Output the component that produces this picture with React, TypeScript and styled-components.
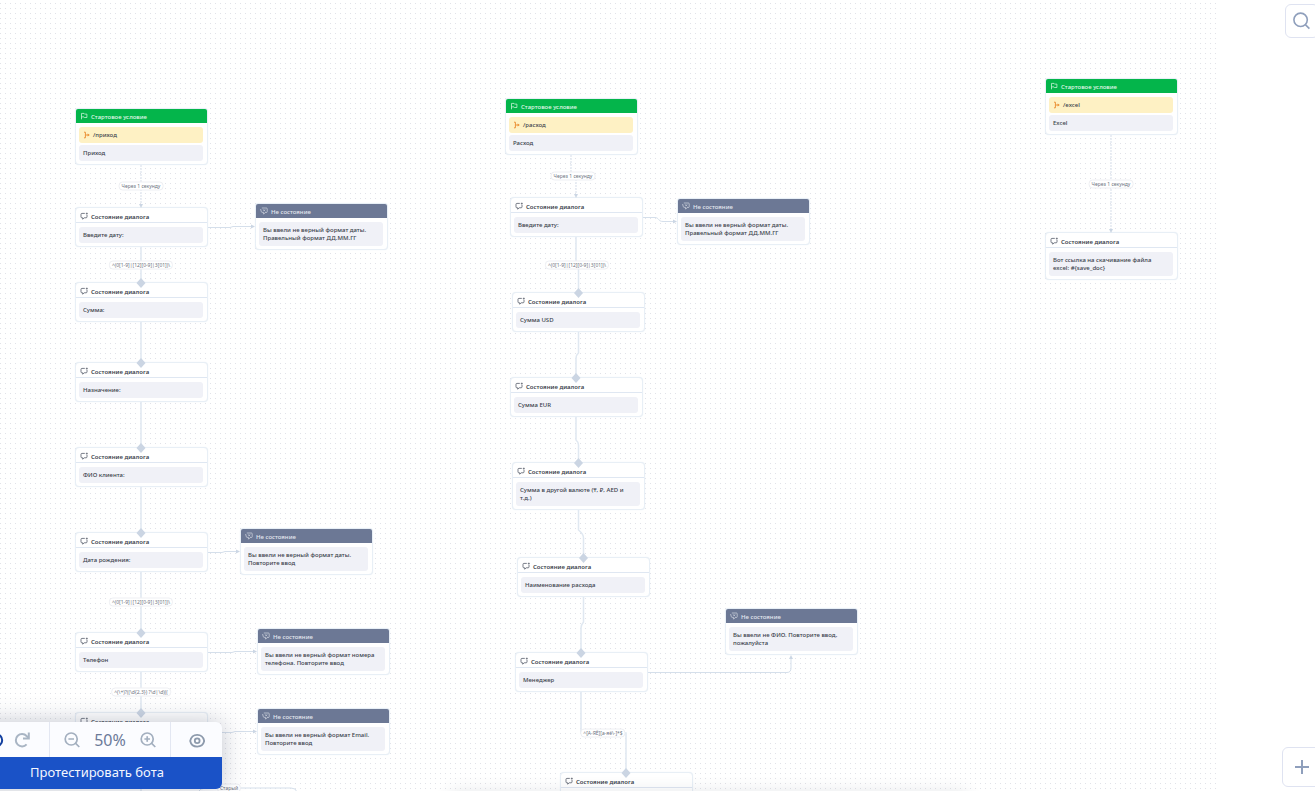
import React from "react";
import styled, { createGlobalStyle, css } from "styled-components";

const GlobalStyle = createGlobalStyle`
  * { box-sizing: border-box; }
  html, body { margin: 0; height: 100%; overflow: hidden; background: #fff; }
  #root { height: 100%; }
  button { font: inherit; margin: 0; padding: 0; border: 0; background: none; cursor: pointer; }
`;

const Page = styled.div`
  display: flex;
  height: 100vh;
  overflow: hidden;
  font-family: "Noto Sans", sans-serif;
  color: #3a3f4b;
`;

const Canvas = styled.main`
  position: relative;
  flex: 1;
  min-width: 0;
  overflow: hidden;
  background-image: radial-gradient(circle at 50% 50%, #e1e2e8 0, #e5e6eb 0.5px, transparent 1px);
  background-size: 5px 5px;
  background-position: -2px 1px;
`;

const Edges = styled.svg`
  position: absolute;
  inset: 0;
  width: 100%;
  height: 100%;
  fill: none;
  stroke: #e0e8f1;
  stroke-width: 1.5;
`;

type Kind = "start" | "dialog" | "negative";

const Card = styled.article<{ $x: number; $y: number }>`
  position: absolute;
  left: ${(p) => p.$x}px;
  top: ${(p) => p.$y}px;
  width: 133px;
  border: 1px solid #e8eff6;
  border-radius: 4px;
  background: #fff;
  box-shadow: 0 0 1px #dfe8f2;
`;

const headerLook = {
  start: css`
    background: #04b54b;
    color: #e2f8ea;
    font-weight: 500;
  `,
  negative: css`
    background: #6c7895;
    color: #e6e9f0;
    font-weight: 500;
  `,
  dialog: css`
    height: 15px;
    padding-top: 3px;
    border-bottom: 1px solid #dfe7f2;
    font-weight: 600;
  `,
};

const CardHeader = styled.h2<{ $kind: Kind }>`
  display: flex;
  align-items: center;
  gap: 3px;
  height: 14px;
  margin: 0;
  padding: 1px 4px 0;
  border-radius: 2px 2px 0 0;
  font-size: 6px;
  line-height: 8px;
  white-space: nowrap;
  ${(p) => headerLook[p.$kind]}
  svg { flex: none; margin-bottom: 1px; }
`;

const CardBody = styled.div`
  display: flex;
  flex-direction: column;
  gap: 2px;
  padding: 4px 4px 3px 3px;
`;

const Message = styled.p<{ $trigger?: boolean }>`
  display: flex;
  align-items: center;
  gap: 2px;
  min-height: 16px;
  margin: 0;
  padding: 4px;
  border-radius: 3px;
  background: ${(p) => (p.$trigger ? "#fef1c4" : "#f0f1f7")};
  font-size: 6px;
  font-weight: 500;
  line-height: 8px;
  white-space: pre;
`;

const EdgeLabel = styled.span<{ $x: number; $y: number }>`
  position: absolute;
  left: ${(p) => p.$x}px;
  top: ${(p) => p.$y}px;
  transform: translate(-50%, -50%);
  padding: 0 2px;
  border: 1px solid #eeeff3;
  border-radius: 4px;
  background: #fff;
  color: #6d7380;
  font-size: 5px;
  line-height: 7px;
  white-space: nowrap;
`;

const BottomShade = styled.div`
  position: absolute;
  left: 450px;
  right: 250px;
  top: 100%;
  height: 20px;
  box-shadow: 0 0 16px rgba(60, 70, 90, 0.12);
`;

const Toolbar = styled.section`
  position: absolute;
  left: -28px;
  bottom: 2px;
  width: 250px;
  border-radius: 6px;
  background: #fbfcff;
  box-shadow: 0 0 24px rgba(50, 60, 90, 0.3);
`;

const Tools = styled.div`
  display: flex;
  height: 35px;
`;

const ToolGroup = styled.div<{ $width?: number }>`
  display: flex;
  align-items: center;
  justify-content: center;
  gap: 12px;
  ${(p) => (p.$width ? `width: ${p.$width}px;` : "flex: 1;")}
  & + & { border-left: 1px solid #e3e7f2; }
`;

const HistoryGroup = styled(ToolGroup)`
  gap: 10px;
  padding-right: 4px;
`;

const IconButton = styled.button<{ $color: string }>`
  display: grid;
  place-items: center;
  width: 16px;
  height: 16px;
  color: ${(p) => p.$color};
`;

const ZoomValue = styled.output`
  width: 36px;
  text-align: center;
  color: #6b7a99;
  font-size: 16px;
  line-height: 20px;
`;

const TestButton = styled.button`
  display: block;
  width: 100%;
  height: 32px;
  padding-bottom: 2px;
  border-radius: 0 0 6px 6px;
  background: #1a52c7;
  color: #f4f7ff;
  font-size: 13px;
  line-height: 20px;
`;

const Rail = styled.aside`
  display: flex;
  justify-content: flex-end;
  width: 98px;
  overflow: hidden;
  background: #fff;
`;

const RailColumn = styled.div`
  display: flex;
  flex-direction: column;
  align-items: center;
  justify-content: space-between;
  margin-right: -7px;
  padding: 4px 0;
`;

const RailButton = styled.button<{ $size: number }>`
  display: grid;
  place-items: center;
  width: ${(p) => p.$size}px;
  height: ${(p) => p.$size}px;
  border: 1px solid #dfe3f1;
  border-radius: 6px;
  background: #fff;
  color: #8f9fbc;
`;

const FlagIcon = () => (
  <svg width="8" height="8" viewBox="0 0 8 8" fill="none" stroke="currentColor" strokeWidth="0.7">
    <path d="M1.5 7.3V1.4H4l.6.7h2.3v3.4H4.4L4 4.9H1.5" />
  </svg>
);

const ChatIcon = () => (
  <svg width="8" height="8" viewBox="0 0 8 8" fill="none" stroke="#565c69" strokeWidth="0.8">
    <path d="M4.8 1.4H1.900q-.9 0-.9.9v2.600q0 .9.9.9h.8v1.400l1.500-1.400h1.900q.9 0 .9-.9V3" />
    <path d="M6.800.6v2M5.800 1.600h2" strokeWidth="0.7" />
  </svg>
);

const ChatOffIcon = () => (
  <svg width="8" height="8" viewBox="0 0 8 8" fill="none" stroke="currentColor" strokeWidth="0.6">
    <path d="M1.8 1h4.6q.8 0 .8.8v2.9q0 .8-.8.8H5.2L3.6 7.2V5.5H2.4q-1 0-1.2-1.2L.6 2" />
    <path d="M3.2 2.4l1.9 1.9M5.1 2.4L3.2 4.3" />
  </svg>
);

const TriggerIcon = () => (
  <svg width="8" height="8" viewBox="0 0 8 8" fill="none" stroke="#eb9238" strokeWidth="1">
    <path d="M1 1.200H2.400V6.800H1M2.400 4H6" />
    <path d="M4.600 2.400L6.800 4L4.600 5.600Z" fill="#eb9238" stroke="none" />
  </svg>
);

const headers: Record<Kind, { title: string; icon: React.ReactNode }> = {
  start: { title: "Стартовое условие", icon: <FlagIcon /> },
  dialog: { title: "Состояние диалога", icon: <ChatIcon /> },
  negative: { title: "Не состояние", icon: <ChatOffIcon /> },
};

type BotNode = { kind: Kind; x: number; y: number; text?: string; command?: string };

const nodes: BotNode[] = [
  { kind: "start", x: 75, y: 108, command: "/приход", text: "Приход" },
  { kind: "dialog", x: 75, y: 207, text: "Введите дату:" },
  { kind: "negative", x: 255, y: 203, text: "Вы ввели не верный формат даты.\nПравельный формат ДД.ММ.ГГ" },
  { kind: "dialog", x: 75, y: 282, text: "Сумма:" },
  { kind: "dialog", x: 75, y: 362, text: "Назначение:" },
  { kind: "dialog", x: 75, y: 447, text: "ФИО клиента:" },
  { kind: "dialog", x: 75, y: 532, text: "Дата рождения:" },
  { kind: "negative", x: 240, y: 528, text: "Вы ввели не верный формат даты.\nПовторите ввод" },
  { kind: "dialog", x: 75, y: 632, text: "Телефон" },
  { kind: "negative", x: 257, y: 628, text: "Вы ввели не верный формат номера\nтелефона. Повторите ввод" },
  { kind: "dialog", x: 75, y: 712 },
  { kind: "negative", x: 257, y: 708, text: "Вы ввели не верный формат Email.\nПовторите ввод" },
  { kind: "start", x: 505, y: 98, command: "/расход", text: "Расход" },
  { kind: "dialog", x: 510, y: 197, text: "Введите дату:" },
  { kind: "negative", x: 677, y: 198, text: "Вы ввели не верный формат даты.\nПравельный формат ДД.ММ.ГГ" },
  { kind: "dialog", x: 512, y: 292, text: "Сумма USD" },
  { kind: "dialog", x: 510, y: 377, text: "Сумма EUR" },
  { kind: "dialog", x: 512, y: 462, text: "Сумма в другой валюте (₸, ₽, AED и\nт.д.)" },
  { kind: "dialog", x: 517, y: 557, text: "Наименование расхода" },
  { kind: "dialog", x: 515, y: 652, text: "Менеджер" },
  { kind: "negative", x: 725, y: 608, text: "Вы ввели не ФИО. Повторите ввод,\nпожалуйста" },
  { kind: "dialog", x: 560, y: 772 },
  { kind: "start", x: 1045, y: 78, command: "/excel", text: "Excel" },
  { kind: "dialog", x: 1045, y: 232, text: "Вот ссылка на скачивание файла\nexcel: #{save_doc}" },
];

const labels = [
  { x: 141, y: 186, text: "Через 1 секунду" },
  { x: 141, y: 265, text: "^(0[1-9]|[12][0-9]|3[01])\\" },
  { x: 141, y: 602, text: "^(0[1-9]|[12][0-9]|3[01])\\" },
  { x: 141, y: 692, text: "^(\\+)?((\\d{2,3}) ?\\d|\\d)((" },
  { x: 229, y: 788, text: "Старый" },
  { x: 573, y: 176, text: "Через 1 секунду" },
  { x: 577, y: 265, text: "^(0[1-9]|[12][0-9]|3[01])\\" },
  { x: 603, y: 733, text: "^[А-ЯЁ][а-яё\\-]*$" },
  { x: 1111, y: 184, text: "Через 1 секунду" },
];

const solidEdges = [
  "M141 247V283M141 322V363M141 402V448M141 487V533M141 572V633M141 672V713M141 750V800",
  "M576 237V265M578.5 265V293",
  "M578.5 332V353Q576 355 576 359V378",
  "M576 417V440Q578.5 442 578.5 445V463",
  "M578.5 510V530Q583.5 534 583.5 538V558",
  "M583.5 597V622Q581 625 581 628V653",
  "M581 692V733H626V773",
];

const thinEdges = [
  "M208 227.5H230L233 226.5H252",
  "M208 552.5H222L225 551.5H237",
  "M208 652.5H232L235 651.5H254",
  "M208 732.5H232L235 731.5H254",
  "M642 217.5H655C659 217.5 658 221.5 663 221.5H674",
  "M647 672.5H787Q791 672.5 791 668V658",
  "M198 792Q200 788 206 788H291Q296 788 297 792",
];

const delayEdges = ["M141 165V204", "M571 155V176M576 176V195", "M1111 135V230"];

const arrows = [
  "M141 208l-2-4h4z",
  "M576 198l-2-4h4z",
  "M1111 233l-2-4h4z",
  "M255 226.5l-4-2v4z",
  "M240 551.5l-4-2v4z",
  "M257 651.5l-4-2v4z",
  "M257 731.5l-4-2v4z",
  "M677 221.5l-4-2v4z",
  "M791 655l-2 4h4z",
];

const ports = [
  [141, 283], [141, 363], [141, 448], [141, 533], [141, 633], [141, 713],
  [578.5, 293], [576, 378], [578.5, 463], [583.5, 558], [581, 653], [626, 773],
];

function NodeCard({ kind, x, y, text, command }: BotNode) {
  const { title, icon } = headers[kind];
  return (
    <Card $x={x} $y={y}>
      <CardHeader $kind={kind}>
        {icon}
        {title}
      </CardHeader>
      <CardBody>
        {command && (
          <Message $trigger>
            <TriggerIcon />
            {command}
          </Message>
        )}
        <Message>{text}</Message>
      </CardBody>
    </Card>
  );
}

const HistoryArrow = ({ flip }: { flip?: boolean }) => (
  <svg width="16" height="16" viewBox="0 0 16 16" fill="none" stroke="currentColor" strokeWidth="2">
    <g transform={flip ? "matrix(-1 0 0 1 16 0)" : undefined}>
      <path d="M12.6 12.4A6.200 6.200 0 1 1 12.6 4L14.6 6" />
      <path d="M14.8 .6V6.400H9" />
    </g>
  </svg>
);

const Magnifier = ({ plus }: { plus?: boolean }) => (
  <svg width="16" height="16" viewBox="0 0 16 16" fill="none" stroke="currentColor" strokeWidth="1.7">
    <circle cx="7.2" cy="7" r="6" />
    <path d="M11.4 11.2L15.3 15M4.4 7H10" />
    {plus && <path d="M7.2 4.2V9.8" />}
  </svg>
);

const EyeIcon = () => (
  <svg width="16" height="16" viewBox="0 0 16 16" fill="none" stroke="currentColor" strokeWidth="1.8">
    <path d="M1.200 9C2 5 4.700 2.800 8.200 2.800S14.400 5 15.200 9C14.400 12.800 11.700 14.600 8.200 14.600S2 12.800 1.200 9Z" />
    <circle cx="8.200" cy="8.800" r="2.400" />
  </svg>
);

export default function App() {
  return (
    <>
      <GlobalStyle />
      <Page>
        <Canvas>
          <Edges aria-hidden="true">
            {solidEdges.map((d) => <path key={d} d={d} />)}
            {thinEdges.map((d) => <path key={d} d={d} strokeWidth="1" stroke="#d5dfeb" />)}
            {delayEdges.map((d) => <path key={d} d={d} strokeDasharray="2 1" stroke="#e4e9f1" />)}
          </Edges>
          {nodes.map((n) => <NodeCard key={`${n.x}-${n.y}`} {...n} />)}
          <Edges aria-hidden="true">
            {arrows.map((d) => <path key={d} d={d} fill="#cbd6e4" stroke="none" />)}
            {ports.map(([x, y]) => (
              <path key={`${x}-${y}`} d={`M${x} ${y - 5}l4.500 5-4.500 5-4.500-5z`} fill="#cbd5e3" stroke="none" />
            ))}
          </Edges>
          {labels.map((l) => (
            <EdgeLabel key={`${l.x}-${l.y}`} $x={l.x} $y={l.y}>{l.text}</EdgeLabel>
          ))}
          <BottomShade />
          <Toolbar aria-label="Инструменты">
            <Tools>
              <HistoryGroup $width={77}>
                <IconButton $color="#123f9f" aria-label="Отменить"><HistoryArrow flip /></IconButton>
                <IconButton $color="#a9b5c4" aria-label="Повторить"><HistoryArrow /></IconButton>
              </HistoryGroup>
              <ToolGroup>
                <IconButton $color="#a3afbf" aria-label="Уменьшить"><Magnifier /></IconButton>
                <ZoomValue>50%</ZoomValue>
                <IconButton $color="#a3afbf" aria-label="Увеличить"><Magnifier plus /></IconButton>
              </ToolGroup>
              <ToolGroup $width={52}>
                <IconButton $color="#8d9aac" aria-label="Просмотр"><EyeIcon /></IconButton>
              </ToolGroup>
            </Tools>
            <TestButton>Протестировать бота</TestButton>
          </Toolbar>
        </Canvas>
        <Rail>
          <RailColumn>
            <RailButton $size={34} aria-label="Поиск">
              <svg width="18" height="18" viewBox="0 0 18 18" fill="none" stroke="currentColor" strokeWidth="1.600">
                <circle cx="7.600" cy="7.800" r="6.700" />
                <path d="M12.400 12.600L16.400 16.600" />
              </svg>
            </RailButton>
            <RailButton $size={40} aria-label="Добавить">
              <svg width="14" height="14" viewBox="0 0 14 14" fill="none" stroke="currentColor" strokeWidth="2">
                <path d="M7 0V14M0 7H14" />
              </svg>
            </RailButton>
          </RailColumn>
        </Rail>
      </Page>
    </>
  );
}
